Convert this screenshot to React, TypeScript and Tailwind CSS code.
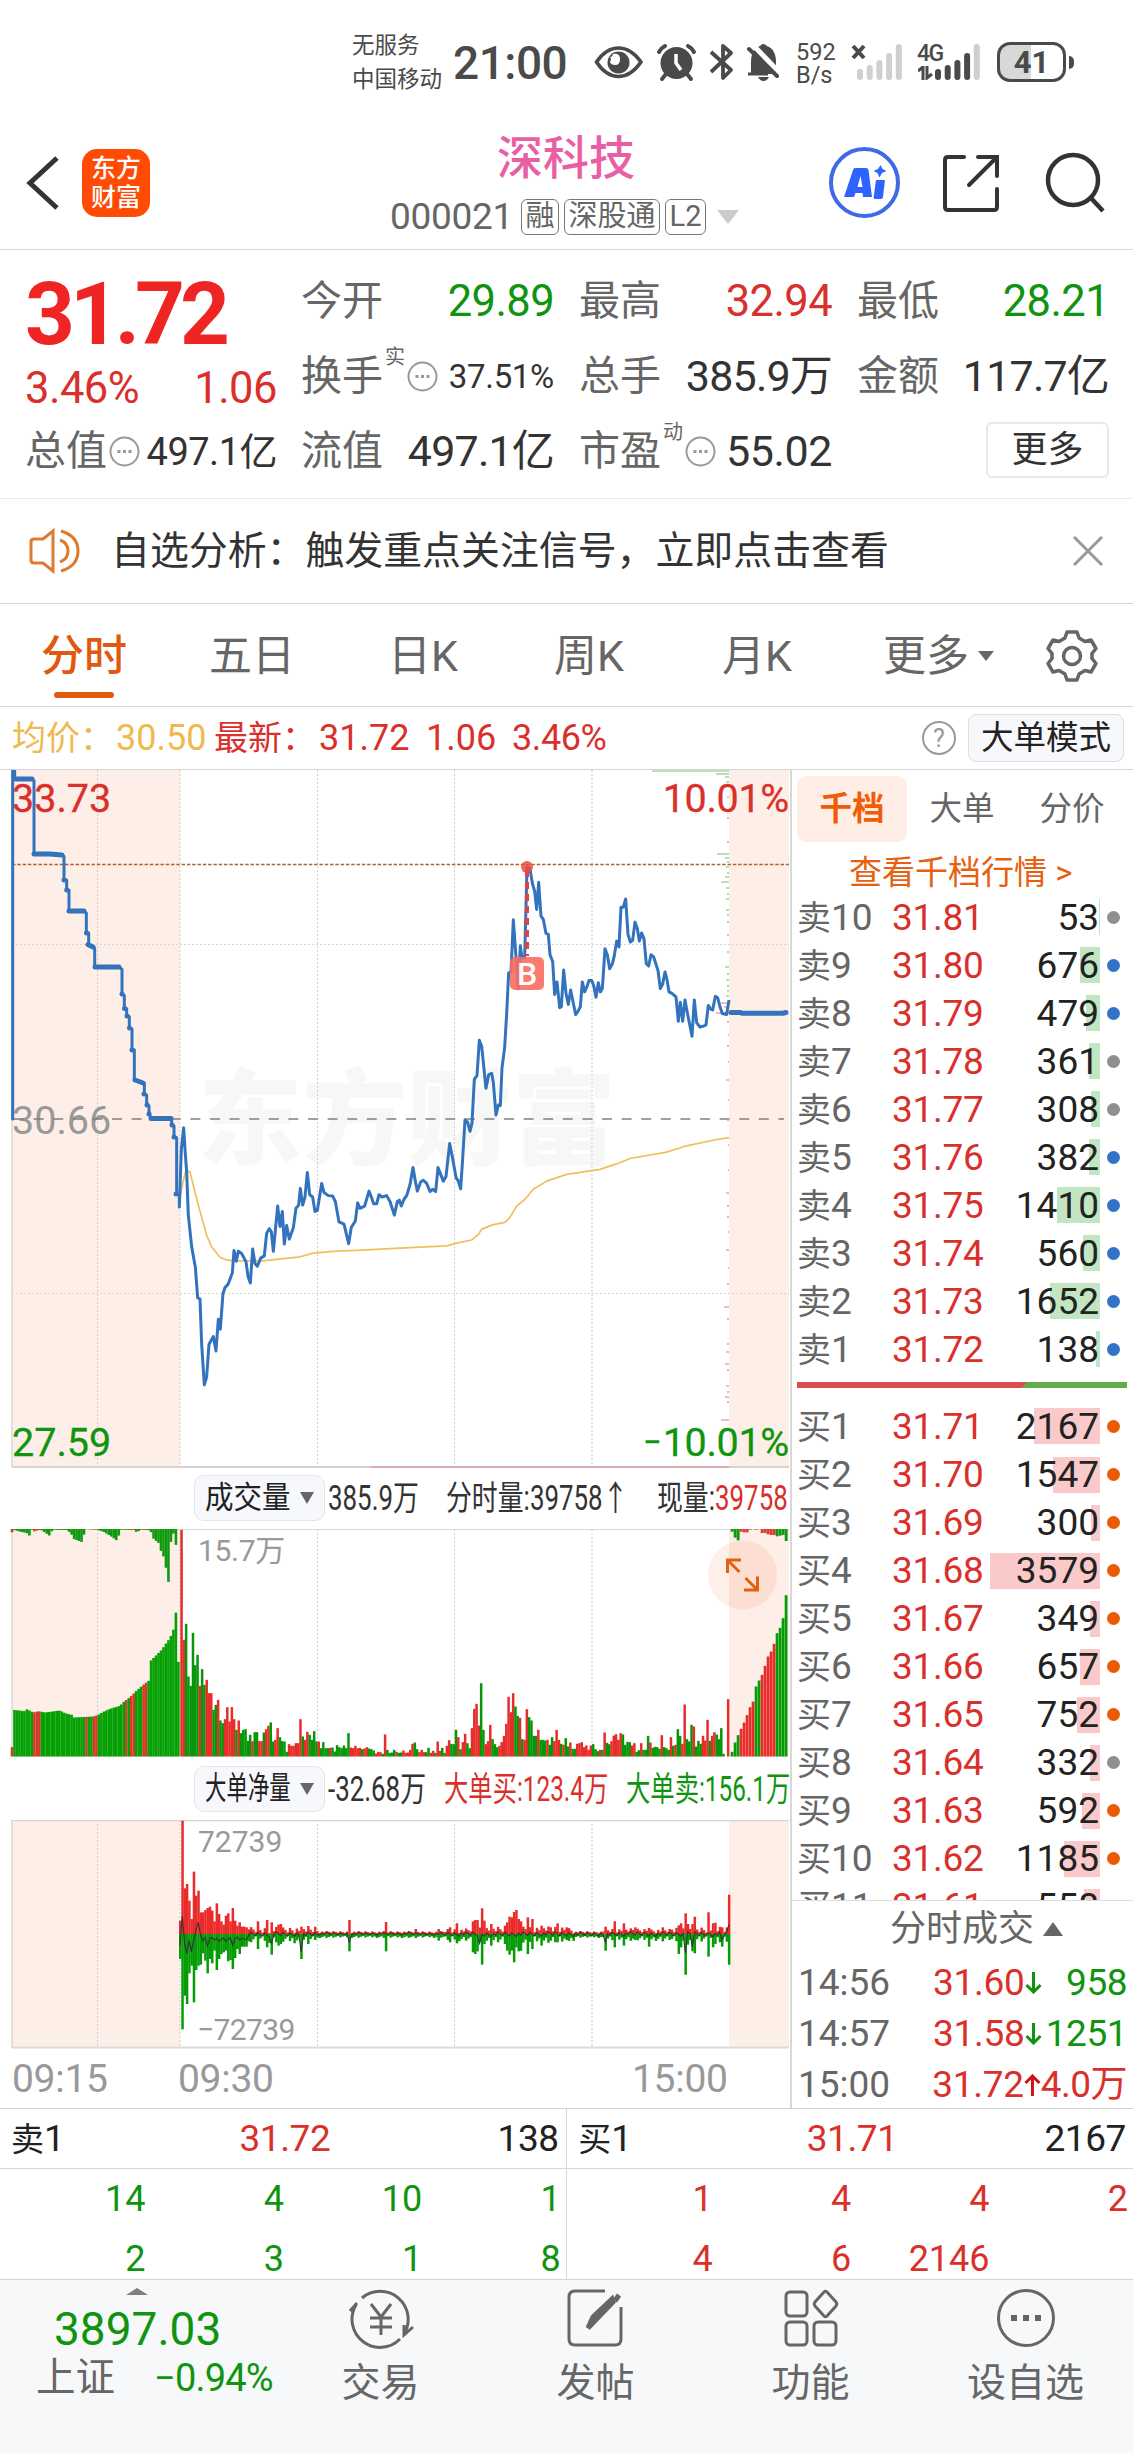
import React from "react";
import clsx from "clsx";

const RED = "#d9302c";
const GREEN = "#109410";
const BLUE = "#3373bd";

type Level = { label: string; price: string; vol: string; bar: number; dot: string };

const sells: Level[] = [
  { label: "卖10", price: "31.81", vol: "53", bar: 1, dot: "bg-[#8e8e93]" },
  { label: "卖9", price: "31.80", vol: "676", bar: 20, dot: "bg-[#3373c4]" },
  { label: "卖8", price: "31.79", vol: "479", bar: 14, dot: "bg-[#3373c4]" },
  { label: "卖7", price: "31.78", vol: "361", bar: 11, dot: "bg-[#8e8e93]" },
  { label: "卖6", price: "31.77", vol: "308", bar: 9, dot: "bg-[#8e8e93]" },
  { label: "卖5", price: "31.76", vol: "382", bar: 11, dot: "bg-[#3373c4]" },
  { label: "卖4", price: "31.75", vol: "1410", bar: 43, dot: "bg-[#3373c4]" },
  { label: "卖3", price: "31.74", vol: "560", bar: 17, dot: "bg-[#3373c4]" },
  { label: "卖2", price: "31.73", vol: "1652", bar: 50, dot: "bg-[#3373c4]" },
  { label: "卖1", price: "31.72", vol: "138", bar: 4, dot: "bg-[#3373c4]" },
];

const buys: Level[] = [
  { label: "买1", price: "31.71", vol: "2167", bar: 66, dot: "bg-[#e85a05]" },
  { label: "买2", price: "31.70", vol: "1547", bar: 47, dot: "bg-[#e85a05]" },
  { label: "买3", price: "31.69", vol: "300", bar: 9, dot: "bg-[#e85a05]" },
  { label: "买4", price: "31.68", vol: "3579", bar: 110, dot: "bg-[#e85a05]" },
  { label: "买5", price: "31.67", vol: "349", bar: 10, dot: "bg-[#e85a05]" },
  { label: "买6", price: "31.66", vol: "657", bar: 20, dot: "bg-[#e85a05]" },
  { label: "买7", price: "31.65", vol: "752", bar: 23, dot: "bg-[#e85a05]" },
  { label: "买8", price: "31.64", vol: "332", bar: 10, dot: "bg-[#8e8e93]" },
  { label: "买9", price: "31.63", vol: "592", bar: 18, dot: "bg-[#e85a05]" },
  { label: "买10", price: "31.62", vol: "1185", bar: 36, dot: "bg-[#e85a05]" },
  { label: "买11", price: "31.61", vol: "558", bar: 16, dot: "bg-[#e85a05]" },
];

// price paths live on a 3x wide grid, see the scale() on the group
const preOpen =
  "38,793 38,24 44,24 44,42 94,42 102,46 102,207 150,207 185,209 192,213 192,265 200,265 200,287 207,287 207,334 250,334 259,338 259,382 266,382 266,407 275,410 284,416 284,457 355,457 366,462 366,517 373,520 373,549 380,549 380,565 388,567 388,592 396,594 396,640 403,640 403,707 425,712 433,714 433,737 440,740 440,762 447,764 447,782 455,792 510,792 515,796 515,806 522,808 522,832 530,834 530,958";

const price =
  "530,958 538,960 538,987 544,860 551,812 555,860 560,910 565,1005 575,1075 586,1120 593,1188 600,1190 605,1290 613,1380 620,1362 627,1290 640,1273 648,1305 655,1235 661,1257 669,1178 675,1165 684,1158 697,1133 702,1083 709,1107 715,1085 725,1090 738,1108 744,1140 751,1155 758,1080 765,1112 772,1118 782,1100 793,1095 800,1045 808,1035 814,1042 820,1085 833,985 840,1030 847,997 853,1069 860,1028 868,1058 880,1033 888,990 896,983 901,946 908,983 915,965 922,911 929,960 938,965 945,997 952,995 965,935 972,955 985,962 998,963 1006,975 1017,1020 1032,1025 1046,1068 1054,1032 1066,1018 1073,978 1080,990 1094,985 1107,952 1114,965 1121,980 1130,980 1137,960 1146,965 1160,962 1170,975 1183,1005 1192,975 1198,972 " +
  "1204,985 1212,970 1220,962 1230,938 1239,900 1246,930 1252,952 1262,932 1270,928 1280,935 1290,953 1298,948 1307,953 1314,900 1322,915 1330,930 1338,920 1349,847 1358,880 1368,922 1375,930 1382,947 1388,880 1395,795 1403,800 1410,820 1416,802 1423,705 1431,697 1438,619 1445,632 1458,725 1466,695 1475,692 1480,712 1488,784 1495,762 1501,763 1506,680 1514,635 1520,560 1526,470 1533,468 1540,353 1548,435 1555,505 1561,410 1566,438 1574,438 1581,237 1590,240 1597,272 1604,290 1610,330 1616,270 1623,345 1630,352 1638,383 1645,385 1650,430 1658,445 1664,518 1671,490 1679,547 1684,545 1691,464 1698,515 1705,540 1712,508 1718,530 1727,562 1734,555 1741,545 1747,490 1754,512 1761,500 1767,487 1775,487 1781,498 1788,524 1795,492 1801,512 1807,505 1815,417 1822,430 1829,461 1837,450 1843,432 1850,400 1857,413 1863,325 1870,325 1877,307 1884,385 1891,402 1898,398 1905,358 1912,372 1918,400 1925,382 1932,395 1939,450 1946,455 1953,430 1961,435 1974,465 1981,505 1988,495 1995,468 2001,485 2007,512 2015,515 2028,523 2035,577 2041,535 2048,577 2055,530 2062,558 2076,610 2083,530 2090,580 2100,590 2112,587 2118,585 2125,542 2132,550 2138,552 2146,522 2153,525 2160,545 2167,560 2180,562 2187,530";

const average =
  "538,972 550,930 558,905 570,910 585,955 605,1010 620,1050 635,1075 660,1098 680,1104 700,1106 790,1106 850,1101 895,1098 940,1089 1000,1085 1100,1082 1200,1078 1340,1073 1370,1067 1415,1060 1435,1048 1445,1036 1480,1026 1515,1021 1530,1010 1550,985 1575,970 1600,948 1640,930 1700,915 1800,904 1850,892 1890,880 2000,866 2060,852 2150,838 2188,834";

// [y, length] of the chip distribution ticks beside the closing auction
const ticksUp = [
  [774, 13], [777, 4], [782, 3], [797, 2], [818, 2], [842, 2], [854, 12], [858, 4], [862, 2], [867, 3], [873, 2], [877, 4],
  [882, 8], [888, 3], [894, 2], [899, 3], [910, 3], [915, 2], [922, 2], [935, 2], [952, 2], [967, 4], [974, 2], [980, 3], [986, 2], [991, 2], [996, 3],
];
const ticksDown = [
  [1003, 8], [1007, 5], [1013, 13], [1022, 2], [1035, 1], [1046, 2], [1062, 1], [1080, 3], [1100, 1], [1120, 2], [1145, 1], [1170, 1],
  [1193, 3], [1206, 2], [1217, 2], [1232, 1], [1250, 3], [1268, 1], [1284, 2], [1307, 5], [1319, 2], [1344, 2], [1352, 3], [1364, 4],
  [1370, 2], [1386, 3], [1392, 2], [1397, 4], [1402, 2], [1420, 8],
];

// auction volume outline, [x, top]
const auction = [
  [36, 862], [40, 750], [75, 754], [80, 748], [100, 758], [115, 754], [135, 758], [180, 752], [195, 760], [215, 765], [222, 773],
  [280, 770], [295, 765], [310, 756], [330, 747], [360, 738], [370, 727], [390, 712], [410, 692], [430, 675], [447, 662], [452, 603],
  [470, 585], [485, 570], [500, 548], [510, 535], [520, 510], [525, 500], [530, 423], [537, 672],
];
const auctionTop = [
  [36, 10], [44, 3], [60, 8], [80, 12], [88, 20], [95, 1], [98, 8], [118, 3], [125, 4], [140, 14], [150, 21], [157, 2], [200, 3],
  [212, 12], [222, 30], [248, 40], [255, 0], [290, 2], [310, 8], [330, 20], [353, 36], [360, 2], [405, 3], [412, 14], [418, 2], [445, 3],
  [454, 10], [461, 30], [476, 42], [485, 72], [492, 85], [499, 122], [507, 168], [514, 12], [521, 14], [529, 54],
];

// minute volume, negative is a falling minute
const volume = [
  680, 350, -398, -240, -212, -371, -274, -305, 212, -262, -215, 230, 190, 190, -140, -155, 170, -108, -100, 112, 148, 105, 148, 112, -80,
  108, -70, -80, -82, -47, -65, 46, -73, -73, 46, 46, -72, 82, 92, -102, -45, 50, 85, -58, -46, -45, -14, 37, 32, 32, 40, 40, 112, -60, 50,
  74, -65, -50, -76, -45, 45, -25, -43, -25, -25, 26, -27, -15, -34, -28, -25, -33, -25, -70, 27, 25, 32, 25, 26, -22, 24, 28, -24, -22,
  -18, 9, 14, 13, -8, 66, -20, -11, -12, -20, 14, -11, -12, 18, 11, 12, 20, 38, -42, -22, 13, 20, 13, -13, -26, 11, 17, -11, 45, 17, -26,
  -11, 32, 49, -38, -37, -80, 58, -22, 43, 68, -40, -25, 85, 143, 158, 93, -220, -80, 37, 46, 95, -52, -37, -28, 32, 43, 62, 98, 179, 133,
  190, -150, -122, 116, -52, 50, 142, -118, -108, -62, -62, 80, -50, -50, -48, 50, -35, -58, 46, 80, 50, -38, 35, -55, -30, 42, -23, -23,
  38, 40, 43, 28, 33, 20, 33, -37, -22, -16, 20, -20, 72, -41, -37, 46, 63, 67, 50, 70, -66, -35, -44, -43, 33, 40, -14, -19, 40, -20,
  -20, -62, 42, -26, -29, -28, -23, 64, -28, -25, -20, 58, -32, 35, -82, -62, 38, 156, -52, -45, -95, 90, -30, -47, -38, 62, 48, 110, -47,
  62, 73, -66, -52, -85, -8, 0, 172,
];
const closing = [-14, -42, -64, 83, 102, 124, 148, 165, -210, -228, 245, 272, 300, 315, 338, -370, -386, -415, -484];
const closingTop = [-8, -26, -34, 8, 10, 10, 2, 0, 2, 0, 12, 12, 16, 18, 18, -22, -20, -18, -36];

// big order buy / sell per minute: the opening half hour, then isolated spikes by index
const bigOpen = [
  [40, 75], [340, 286], [137, 185], [150, 210], [100, 118], [45, 95], [187, 205], [115, 108], [130, 95], [65, 92], [65, 58], [72, 80],
  [78, 118], [82, 75], [70, 88], [38, 50], [92, 108], [60, 75], [38, 60], [28, 55], [55, 50], [62, 82], [38, 78], [78, 105], [40, 72],
  [25, 45], [35, 60], [22, 38], [22, 38], [20, 38], [14, 22],
];
const bigSpikes: Record<number, number[]> = {
  34: [38, 45], 38: [42, 40], 40: [35, 62], 43: [28, 35], 44: [30, 30], 53: [22, 75], 56: [24, 30], 59: [22, 18], 74: [42, 52],
  90: [36, 52], 103: [15, 12], 113: [15, 20], 118: [20, 25], 121: [32, 28], 128: [38, 55], 129: [42, 60], 130: [42, 52], 132: [77, 92],
  133: [40, 30], 136: [30, 35], 142: [25, 30], 143: [35, 50], 144: [52, 62], 145: [50, 50], 146: [66, 85], 147: [72, 40], 148: [45, 52],
  149: [38, 50], 152: [50, 60], 154: [45, 45], 158: [25, 35], 162: [20, 20], 165: [32, 25], 169: [20, 18], 186: [22, 50], 190: [38, 40],
  194: [32, 35], 199: [20, 18], 205: [18, 38], 211: [20, 22], 218: [26, 60], 219: [32, 40], 221: [62, 122], 222: [30, 32], 224: [30, 52],
  225: [52, 58], 231: [65, 68], 233: [32, 40], 234: [34, 30], 237: [20, 38], 240: [118, 92],
};

function noise(i: number) {
  return ((i * 7919 + 104) % 97) / 97;
}

function bigOrder(i: number): number[] {
  if (i < bigOpen.length) return bigOpen[i];
  if (bigSpikes[i]) return bigSpikes[i];
  const calm = (i > 60 && i < 116) || (i > 172 && i < 185);
  const busy = i < 60 || (i > 126 && i < 172) || i > 214;
  const k = calm ? 6 : busy ? 20 : 14;
  return [3 + noise(i) * k, 5 + noise(i + 3) * k * 1.2];
}

const netLine = Array.from({ length: 241 }, (_, i) => {
  const early: Record<number, number> = { 0: -35, 1: 52, 2: -30, 3: -60, 4: -20, 5: -55, 6: -20, 7: 10, 8: 34, 9: -5, 10: -22, 12: -38, 14: -12, 17: -24, 22: -12, 23: -35, 28: -15, 40: -30, 53: -55, 74: -25, 131: -30, 186: -26, 221: -58, 224: -40, 237: -20, 240: 26 };
  const v = early[i] ?? (i < 30 ? -10 - noise(i) * 15 : (noise(i) - 0.6) * (i > 60 && i < 116 ? 9 : 16));
  return `${(180 + i * 2.287).toFixed(1)},${(113.5 - v / 3).toFixed(1)}`;
}).join(" ");

function interpolate(points: number[][], x: number) {
  for (let i = 1; i < points.length; i++) {
    const [x0, y0] = points[i - 1];
    const [x1, y1] = points[i];
    if (x <= x1) return y0 + ((x - x0) / (x1 - x0)) * (y1 - y0);
  }
  return points[points.length - 1][1];
}

const isRedAuction = (x: number) =>
  x < 40 || (x > 96 && x < 122) || (x > 254 && x < 266) || (x > 279 && x < 290) || (x > 374 && x < 384) || (x > 391 && x < 408) || (x > 428 && x < 444);

const VGrid = ({ h }: { h: number }) => (
  <g stroke="#cfcfcf" strokeWidth="1" strokeDasharray="2 2">
    {[97.5, 180, 317.5, 454.5, 592].map((x) => (
      <line key={x} x1={x} x2={x} y1="0" y2={h} />
    ))}
  </g>
);

const PriceChart = () => (
  <svg width="790" height="699" viewBox="0 770 790 699" className="block overflow-visible">
    <rect x="12" y="770" width="168" height="697" fill="#fdeee7" />
    <rect x="729" y="770" width="60" height="697" fill="#fdeee7" />
    <text x="198" y="1157" fontSize="104" fontWeight="900" fill="#f7f7f7" textLength="418">
      东方财富
    </text>
    <g transform="translate(0 770)">
      <VGrid h={697} />
    </g>
    <g stroke="#d6d6d6" strokeDasharray="2 2">
      <line x1="12" x2="789" y1="944.5" y2="944.5" />
      <line x1="12" x2="789" y1="1293.5" y2="1293.5" />
    </g>
    <line x1="12" x2="12" y1="770" y2="1467" stroke="#d8d8d8" strokeWidth="1.5" />
    <text x="12" y="1134" fontSize="39.500" fill="#999">30.66</text>
    <line x1="14" x2="784" y1="1119" y2="1119" stroke="#808080" strokeWidth="1.6" strokeDasharray="10 9.6" />
    <line x1="12" x2="789" y1="864.5" y2="864.5" stroke="#b5622f" strokeWidth="1.4" strokeDasharray="3.5 1.8" />
    <text x="12" y="812" fontSize="39.500" fill={RED} stroke={RED} strokeWidth="0.300">33.73</text>
    <text x="12" y="1456" fontSize="39.500" fill={GREEN} stroke={GREEN} strokeWidth="0.300">27.59</text>
    <rect x="652" y="770" width="77" height="2" fill="#bfe0bf" />
    {ticksUp.map(([y, w]) => (
      <line key={y} x1={729 - w} x2="729" y1={y} y2={y} stroke="#92cf92" strokeWidth="1.3" />
    ))}
    {ticksDown.map(([y, w]) => (
      <line key={y} x1={729 - w} x2="729" y1={y} y2={y} stroke="#e79a9a" strokeWidth="1.3" />
    ))}
    <g transform="translate(0 760) scale(0.33333 0.45283)" fill="none" strokeLinejoin="round">
      <polyline points={average} stroke="#edc05c" strokeWidth="1.7" vectorEffect="non-scaling-stroke" />
      <polyline points={preOpen} stroke={BLUE} strokeWidth="3" strokeLinecap="round" vectorEffect="non-scaling-stroke" />
      <polyline points={price} stroke={BLUE} strokeWidth="3" vectorEffect="non-scaling-stroke" />
    </g>
    <path
      d="M15 779H32M34 854H50L62 855M69 911H84M95 967H119M135 1080L143 1083M151 1118.500H171M88 944.500L93 947"
      stroke={BLUE} strokeWidth="5" strokeLinecap="round" fill="none"
    />
    <path d="M64 880h.1M66.700 890h.1M86.500 933h.1M122 994h.1M124.500 1008.500h.1M127 1016h.1M129.500 1028h.1M132 1050h.1M144 1094h.1M147 1105h.1M149 1114h.1M172 1125h.1M174 1137h.1M176 1194h.1" stroke={BLUE} strokeWidth="5" strokeLinecap="round" />
    <path d="M731 1012.500H740L742 1013.200H783L786 1012.500" stroke={BLUE} strokeWidth="5" strokeLinecap="round" fill="none" />
    <line x1="527" x2="527" y1="870" y2="956" stroke="#df4145" strokeWidth="4" strokeDasharray="7 5" />
    <circle cx="527" cy="867" r="6" fill="#e8503f" fillOpacity="0.85" />
    <rect x="510" y="957" width="34" height="33" rx="5" fill="#f96d61" fillOpacity="0.9" />
    <text x="527" y="984.500" fontSize="32" fontWeight="500" fill="#fff" textAnchor="middle">B</text>
    <text x="789" y="812" fontSize="39.500" letterSpacing="-0.300" fill={RED} stroke={RED} strokeWidth="0.300" textAnchor="end">10.01%</text>
    <text x="789" y="1456" fontSize="39.500" letterSpacing="-0.300" fill={GREEN} stroke={GREEN} strokeWidth="0.300" textAnchor="end">10.01%</text>
    <text x="643" y="1456" fontSize="39.500" textLength="19" lengthAdjust="spacingAndGlyphs" fill={GREEN}>−</text>
    <line x1="12" x2="789" y1="1467" y2="1467" stroke="#d4d4d4" strokeWidth="2" />
    <line x1="371" x2="729" y1="1467" y2="1467" stroke="#dbaeae" strokeWidth="2" />
  </svg>
);

const VolumeChart = () => (
  <svg width="790" height="228" viewBox="0 0 790 228" className="block">
    <rect x="12" width="168" height="228" fill="#fdeee7" />
    <rect x="729" width="60" height="228" fill="#fdeee7" />
    <VGrid h={228} />
    <line x1="12" x2="789" y1="0.5" y2="0.5" stroke="#d8d8d8" />
    <line x1="12" x2="12" y1="0" y2="228" stroke="#d8d8d8" strokeWidth="1.5" />
    <text x="198" y="32" fontSize="30" fill="#999" letterSpacing="-0.300">15.7万</text>
    {Array.from({ length: 68 }, (_, i) => {
      const x = 36 + i * 7.45;
      const h = (890 - interpolate(auction, x)) / 3;
      const red = isRedAuction(x);
      return (
        <g key={i}>
          <rect x={x / 3 - 1.3} y={227.5 - h} width="2.6" height={h} fill={red ? "#d83a2a" : "#04a004"} />
          <rect x={x / 3 - 1.3} y="0" width="2.6" height={x > 533 ? 0 : interpolate(auctionTop, x) / 3} fill={red ? "#d83a2a" : "#109a10"} />
        </g>
      );
    })}
    {volume.map((v, i) => (
      <rect key={i} x={180.300 + i * 2.287} y={227.5 - Math.abs(v) / 3} width="2.5" height={Math.abs(v) / 3} fill={v > 0 ? "#e52e2a" : "#079607"} />
    ))}
    {closing.map((v, i) => (
      <g key={i}>
        <rect x={730.700 + i * 3} y={227.5 - Math.abs(v) / 3} width="2.8" height={Math.abs(v) / 3} fill={v > 0 ? "#ea2b29" : "#079c07"} />
        <rect x={730.700 + i * 3} y="0" width="2.9" height={Math.abs(closingTop[i]) / 3} fill={closingTop[i] > 0 ? "#dc3b32" : "#109a10"} />
      </g>
    ))}
    <circle cx="742.500" cy="46" r="34.500" fill="#f5651a" fillOpacity="0.1" />
    <path d="M741 31H727.500V44M728 31.500L739.500 43M757.500 47.500V61H744M757 60.500L745.500 49" fill="none" stroke="#e2600f" strokeWidth="3" />
  </svg>
);

const BigOrderChart = () => (
  <svg width="790" height="230" viewBox="0 0 790 230" className="block">
    <rect x="12" width="168" height="227" fill="#fdeee7" />
    <rect x="729" width="60" height="227" fill="#fdeee7" />
    <VGrid h={227} />
    <line x1="12" x2="789" y1="0.5" y2="0.5" stroke="#d4d4d4" strokeWidth="1.5" />
    <line x1="12" x2="12" y1="0" y2="228" stroke="#d8d8d8" strokeWidth="1.5" />
    {Array.from({ length: 241 }, (_, i) => {
      const [up, down] = bigOrder(i);
      const x = 179 + i * 2.287;
      return (
        <g key={i}>
          <rect x={x} y={114 - up / 3} width="2.5" height={up / 3} fill="#ea2b29" />
          <rect x={x} y="114" width="2.5" height={down / 3} fill="#069c06" />
        </g>
      );
    })}
    <polyline points={netLine} fill="none" stroke="#333" strokeWidth="1.1" />
    <text x="198" y="32" fontSize="30" fill="#999">72739</text>
    <text x="197" y="220" fontSize="30" fill="#999" letterSpacing="-0.600">−72739</text>
    <line x1="12" x2="789" y1="227.500" y2="227.500" stroke="#dcdcdc" strokeWidth="2" />
  </svg>
);

const Dots = () => (
  <svg width="31" height="31" viewBox="0 0 31 31" className="shrink-0" fill="none" stroke="#999" strokeWidth="2">
    <circle cx="15.500" cy="15.500" r="14" />
    <path d="M8.500 15.500h3M14 15.500h3M19.500 15.500h3" strokeWidth="3" />
  </svg>
);

const Signal = ({ solid }: { solid: number }) => (
  <svg width="46" height="38" viewBox="0 0 46 38">
    {[11, 15, 20, 27, 36].map((h, i) => (
      <rect key={h} x={i * 9.7} y={37 - h} width="6" height={h} rx="3" fill={i < solid ? "#4a4a4a" : "#cfcfcf"} />
    ))}
  </svg>
);

const StatusBar = () => (
  <div className="h-[112px] pt-[28px] flex text-[#4a4a4a]">
    <div className="ml-[352px] w-[101px] text-[22.500px] leading-[34px] whitespace-nowrap">
      <p>无服务</p>
      <p>中国移动</p>
    </div>
    <p className="w-[140px] pt-[12px] text-[46px] leading-[46px] font-medium tracking-[-0.5px]">21:00</p>
    <svg width="190" height="40" viewBox="593 42 190 40" className="mt-[14px] shrink-0" fill="none" stroke="#4a4a4a">
      <path d="M596.500 62Q606 48 618.500 48T641 62Q631 76.500 618.500 76.500T596.500 62Z" strokeWidth="3.600" />
      <circle cx="618.500" cy="62.500" r="11" fill="#4a4a4a" stroke="none" />
      <path d="M613 54q7-1 7 5t-5 6q-4 0-5-3z" fill="#fff" stroke="none" />
      <path d="M610 57q3-1.500 5 1l-3 3z" fill="#fff" stroke="none" />
      <circle cx="676.500" cy="63" r="16" fill="#4a4a4a" stroke="none" />
      <path d="M659 52Q661 48 665 46M694 52Q692 48 688 46M666 74l-4 5M687 74l4 5" strokeWidth="4" strokeLinecap="round" />
      <path d="M676 54v9l5 7" stroke="#fff" strokeWidth="3.500" />
      <path d="M711 52l20 18-8 8V46l8 7-20 19" strokeWidth="3.800" strokeLinejoin="round" />
      <path d="M751 74V62c0-11 6-15 9-16q3-4 7 0c6 2 9 8 9 16v12z" fill="#4a4a4a" stroke="none" />
      <path d="M752 44l31 32" stroke="#fff" strokeWidth="5" />
      <path d="M749 49l28 27" strokeWidth="4" strokeLinecap="round" />
      <path d="M748 74h20" strokeWidth="3" />
      <path d="M758 77h11q-2 4-5.500 4t-5.500-4z" fill="#4a4a4a" stroke="none" />
    </svg>
    <div className="ml-[13px] w-[55px] pt-[13px] text-[23.500px] leading-[23px]">
      <p>592</p>
      <p>B/s</p>
    </div>
    <div className="relative w-[70px] pl-[6px] pt-[15px]">
      <Signal solid={0} />
      <svg width="16" height="16" viewBox="0 0 16 16" className="absolute left-0 top-[16px]" stroke="#4a4a4a" strokeWidth="4">
        <path d="M2 2l11 12M13 2L2 14" />
      </svg>
    </div>
    <div className="relative w-[66px] pl-[5px] pt-[15px]">
      <div className="pl-[9px]">
        <Signal solid={4} />
      </div>
      <p className="absolute left-[-4px] top-[14px] text-[23px] leading-[24px] font-medium tracking-[-1.500px]">4G</p>
      <svg width="16" height="14" viewBox="0 0 16 14" className="absolute left-[-3px] top-[38px]" fill="none" stroke="#4a4a4a" strokeWidth="3">
        <path d="M0 5l5-4v13M9 0v12l5-4" />
      </svg>
    </div>
    <div className="ml-[10px] mt-[14px] flex items-center h-[40px]">
      <div className="w-[69px] h-[40px] rounded-[13px] border-[3px] border-[#4a4a4a] flex items-center justify-center bg-[linear-gradient(to_right,#d8d8d8_50%,#fff_50%)] text-[31px] leading-none font-bold">
        41
      </div>
      <div className="ml-[3px] w-[5px] h-[13px] rounded-r-full bg-[#4a4a4a]" />
    </div>
  </div>
);

const Tag = ({ children }: { children: React.ReactNode }) => (
  <span className="h-[36px] px-[3.500px] flex items-center whitespace-nowrap border-[1.500px] border-[#777] rounded-[6px] text-[29px] leading-none">
    {children}
  </span>
);

const Header = () => (
  <div className="h-[138px] flex border-b-[1.500px] border-[#d8d8d8]">
    <svg width="34" height="54" viewBox="0 0 34 54" className="ml-[26px] mt-[44px]" fill="none" stroke="#333" strokeWidth="5">
      <path d="M31 2L4 27l27 25" />
    </svg>
    <div className="ml-[22px] mt-[37px] w-[68px] h-[68px] rounded-[15px] bg-[#ff4b03] text-white text-[25px] leading-[29px] font-medium text-center pt-[5px]">
      <p>东方</p>
      <p>财富</p>
    </div>
    <div className="ml-[240px] w-[351px] pt-[22px]">
      <p className="pl-[107px] text-[46px] leading-[48px] font-medium text-[#e95fa6]">深科技</p>
      <div className="mt-[16px] flex items-center text-[#666]">
        <span className="text-[37px] leading-none w-[131px] shrink-0 tracking-[-0.3px]">000021</span>
        <div className="flex gap-[5px] shrink-0">
          <Tag>融</Tag>
          <Tag>深股通</Tag>
          <Tag>L2</Tag>
        </div>
        <span className="ml-[11px] border-x-[11px] border-t-[14px] border-x-transparent border-t-[#ccc]" />
      </div>
    </div>
    <div className="ml-[88px] mt-[35px] w-[71px] h-[71px] rounded-full border-[4px] border-[#3f69e6] flex items-center justify-center">
      <svg width="44" height="36" viewBox="0 0 44 36" fill="#2f63ff">
        <path fillRule="evenodd" d="M12 3h11q2 0 2.500 2L29 32h-9l-.5-4h-7L11 32H1L10 5q.5-2 2-2zM17.500 11l-3 11h5z" />
        <path d="M33 15h9l-2 17q-.3 2-2 2h-6q-1.500 0-1.300-2z" />
        <path d="M37.500 0l2 4 4 2-4.500 2-2.500 4.500-2-4.500-4-2 4.500-2z" />
      </svg>
    </div>
    <svg width="58" height="60" viewBox="0 0 58 60" className="ml-[42px] mt-[41px]" fill="none" stroke="#333" strokeWidth="4">
      <path d="M22 4H6Q3 4 3 7V54Q3 57 6 57H52Q55 57 55 54V36" strokeLinecap="round" />
      <path d="M36 4H55V23M54 5L27 32" strokeLinecap="round" />
    </svg>
    <svg width="60" height="62" viewBox="0 0 60 62" className="ml-[45px] mt-[39px]" fill="none" stroke="#333" strokeWidth="4.500">
      <circle cx="28" cy="29" r="25" />
      <path d="M45 46l13 14" />
    </svg>
  </div>
);

const Stat = ({ label, sup, dots, value, cls }: { label: string; sup?: string; dots?: boolean; value: string; cls?: string }) => (
  <div className="relative h-[75px] flex items-center justify-between leading-none whitespace-nowrap">
    <span className="flex items-center text-[41px] text-[#666]">
      {label}
      {sup && <sup className="absolute left-[84px] top-[8px] text-[20px] leading-none">{sup}</sup>}
      {dots && (
        <span className={sup ? "ml-[24px]" : "ml-[2px]"}>
          <Dots />
        </span>
      )}
    </span>
    <span className={cls || "text-[43px] text-[#333] tracking-[-0.8px]"}>{value}</span>
  </div>
);

const Quote = () => (
  <div className="h-[249px] flex pl-[25px] pt-[14px] border-b-[1.500px] border-[#ececec]">
    <div className="w-[252px]">
      <p className="h-[85px] pt-[6px] text-[87px] leading-[88px] font-bold text-[#ef2524] tracking-[-5px]">31.72</p>
      <div className="h-[65px] pt-[18px] flex justify-between text-[43.500px] leading-[44px] text-[#d9302c] tracking-[-0.5px]">
        <span>3.46%</span>
        <span>1.06</span>
      </div>
      <Stat label="总值" dots value="497.1亿" cls="text-[38px] text-[#333] tracking-[-0.5px]" />
    </div>
    <div className="ml-[24px] w-[253px]">
      <Stat label="今开" value="29.89" cls="text-[43.500px] text-[#109410] tracking-[-0.6px]" />
      <Stat label="换手" sup="实" dots value="37.51%" cls="text-[33px] text-[#333] tracking-[-0.3px]" />
      <Stat label="流值" value="497.1亿" />
    </div>
    <div className="ml-[25px] w-[253px]">
      <Stat label="最高" value="32.94" cls="text-[43.500px] text-[#d9302c] tracking-[-0.6px]" />
      <Stat label="总手" value="385.9万" />
      <Stat label="市盈" sup="动" dots value="55.02" cls="text-[43px] text-[#333] tracking-[-0.4px]" />
    </div>
    <div className="ml-[25px] w-[252px]">
      <Stat label="最低" value="28.21" cls="text-[43.500px] text-[#109410] tracking-[-0.6px]" />
      <Stat label="金额" value="117.7亿" />
      <button className="ml-auto mt-[8px] block w-[123px] h-[56px] rounded-[6px] border-2 border-[#e8e8e8] text-[36px] leading-none text-[#333]">更多</button>
    </div>
  </div>
);

const Notice = () => (
  <div className="h-[105px] flex items-center border-b-[1.500px] border-[#d4d4d4]">
    <svg width="52" height="46" viewBox="0 0 52 46" className="ml-[29px]" fill="none" stroke="#dd7a2e" strokeWidth="3">
      <path d="M24 3v40l-10-8H5q-3 0-3-3V14q0-3 3-3h9zM31 12q8 3 8 11t-8 11M32 3q17 5 17 20T32 43" />
    </svg>
    <p className="ml-[30px] text-[38.900px] leading-none text-[#333]">自选分析：触发重点关注信号，立即点击查看</p>
    <svg width="30" height="30" viewBox="0 0 30 30" className="ml-auto mr-[30px]" stroke="#999" strokeWidth="3">
      <path d="M1 1l28 28M29 1L1 29" />
    </svg>
  </div>
);

const Tabs = () => (
  <div className="h-[103px] pt-[2px] flex items-center border-b-[1.500px] border-[#d4d4d4] text-[43px] leading-none text-[#666]">
    <div className="relative ml-[41px] w-[168px] text-[#e0590f] font-medium">
      分时
      <span className="absolute left-[13px] top-[57px] w-[60px] h-[6px] rounded-full bg-[#e35a0c]" />
    </div>
    <span className="w-[179px]">五日</span>
    <span className="w-[166px]">日K</span>
    <span className="w-[168px]">周K</span>
    <span className="w-[161px]">月K</span>
    <span>更多</span>
    <span className="ml-[9px] border-x-[8px] border-t-[10px] border-x-transparent border-t-[#666]" />
    <svg width="54" height="54" viewBox="0 0 54 54" className="ml-[51px]" fill="none" stroke="#666" strokeWidth="3.500" strokeLinejoin="round">
      <path d="M22 3h10l2 6 6 3.500 6-1.500 5 8.500-4 5v5l4 5-5 8.500-6-1.500-6 3.500-2 6H22l-2-6-6-3.500L8 43l-5-8.500 4-5v-5l-4-5L8 11l6 1.500L20 9z" />
      <circle cx="27" cy="27" r="8.500" />
    </svg>
  </div>
);

const InfoBar = () => (
  <div className="h-[63px] flex items-center border-b-[1.500px] border-[#d4d4d4] text-[36px] leading-none text-[#d9302c]">
    <span className="ml-[12px] w-[104px] text-[34px] text-[#efb94f]">均价：</span>
    <span className="w-[98px] text-[#efb94f]">30.50</span>
    <span className="w-[105px] text-[34px]">最新：</span>
    <span className="w-[107px]">31.72</span>
    <span className="w-[86px]">1.06</span>
    <span className="tracking-[-0.4px]">3.46%</span>
    <span className="ml-auto w-[34px] h-[34px] rounded-full border-[2.500px] border-[#999] text-[#999] text-[25px] flex items-center justify-center">?</span>
    <span className="ml-[12px] mr-[9px] w-[156px] h-[48px] rounded-[8px] border-[1.500px] border-[#dcdfe4] bg-[#f6f8fb] text-[32.500px] text-[#222] flex items-center justify-center">
      大单模式
    </span>
  </div>
);

const Squeezed = ({ children, className, tight }: { children: React.ReactNode; className?: string; tight?: boolean }) => (
  <span className={clsx("block whitespace-nowrap", className)}>
    <span className={clsx("inline-block origin-left text-[34.500px] leading-[46px]", tight ? "scale-x-[0.705]" : "scale-x-[0.750]")}>{children}</span>
  </span>
);

const Picker = ({ label, narrow }: { label: string; narrow?: boolean }) => (
  <div className="ml-[194px] w-[131px] h-[46px] shrink-0 rounded-[10px] border-[1.500px] border-[#e2e5ea] bg-[#f6f8fb] flex items-center text-[#222] whitespace-nowrap">
    <span className="ml-[10px] w-[95px]">
      <span className={clsx("inline-block origin-left leading-none", narrow ? "text-[32px] scale-x-[0.670]" : "text-[31px] scale-x-[0.920]")}>{label}</span>
    </span>
    <span className="shrink-0 border-x-[7.500px] border-t-[12px] border-x-transparent border-t-[#666]" />
  </div>
);

const Charts = () => (
  <div className="w-[790px] overflow-hidden">
    <PriceChart />
    <div className="h-[60px] pt-[6px] flex text-[#333]">
      <Picker label="成交量" />
      <Squeezed className="ml-[3px] w-[118px]">385.9万</Squeezed>
      <Squeezed className="w-[211px]">分时量:39758↑</Squeezed>
      <Squeezed className="w-[132px]">
        现量:<span className="text-[#d9302c]">39758</span>
      </Squeezed>
    </div>
    <VolumeChart />
    <div className="h-[63px] pt-[9px] flex text-[#333]">
      <Picker label="大单净量" narrow />
      <Squeezed className="ml-[3px] w-[116px]">-32.68万</Squeezed>
      <Squeezed tight className="w-[182px] text-[#d9302c]">大单买:123.4万</Squeezed>
      <Squeezed tight className="w-[162px] text-[#109410]">大单卖:156.1万</Squeezed>
    </div>
    <BigOrderChart />
    <div className="h-[57px] pt-[9px] pl-[12px] flex text-[39px] leading-[40px] text-[#999] tracking-[-0.3px]">
      <span className="w-[166px]">09:15</span>
      <span className="w-[454px]">09:30</span>
      <span>15:00</span>
    </div>
  </div>
);

const LevelRow = ({ row, side }: { row: Level; side: "sell" | "buy" }) => (
  <div className="h-[48.060px] shrink-0 flex items-center text-[37px] leading-none">
    <span className="w-[95px] text-[#666]">
      <span className="text-[34px]">{row.label[0]}</span>
      {row.label.slice(1)}
    </span>
    <span className="w-[95px] text-[#d9302c] tracking-[-0.3px]">{row.price}</span>
    <span className="relative w-[113px] h-[36px] flex items-center justify-end text-[#222]">
      <span
        className={clsx("absolute right-0 inset-y-0", side === "sell" ? "bg-[#c1e6c1]" : "bg-[#fac9c9]")}
        style={{ width: row.bar }}
      />
      <span className="relative pr-px">{row.vol}</span>
    </span>
    <span className={clsx("ml-[7px] w-[13px] h-[13px] rounded-full", row.dot)} />
  </div>
);

const trades = [
  { time: "14:56", price: "31.60", up: false, vol: "958" },
  { time: "14:57", price: "31.58", up: false, vol: "1251" },
  { time: "15:00", price: "31.72", up: true, vol: "4.0万" },
];

const OrderBook = () => (
  <div className="w-[343px] border-l-2 border-[#d8d8d8] flex flex-col">
    <div className="pt-[6px] pl-[5px] flex text-[32.500px] leading-none text-[#666]">
      <span className="w-[110px] h-[66px] rounded-[9px] bg-[#feeee6] text-[#f25c07] font-bold flex items-center justify-center">千档</span>
      <span className="w-[110px] h-[66px] flex items-center justify-center">大单</span>
      <span className="w-[110px] h-[66px] flex items-center justify-center">分价</span>
    </div>
    <p className="h-[51px] pt-[14px] pl-[57px] text-[33px] leading-[34px] text-[#e8600f] whitespace-nowrap">查看千档行情 &gt;</p>
    <div className="pl-[5px]">
      {sells.map((r) => (
        <LevelRow key={r.label} row={r} side="sell" />
      ))}
    </div>
    <div className="ml-[5px] mt-[9px] w-[330px] h-[6px] bg-[linear-gradient(135deg,#d94f4f_68.500%,#5fae4b_68.500%)]" />
    <div className="mt-[14px] pl-[5px] h-[498px] overflow-hidden">
      {buys.map((r) => (
        <LevelRow key={r.label} row={r} side="buy" />
      ))}
    </div>
    <div className="h-[206px] border-t-[1.500px] border-[#dedede]">
      <div className="h-[56px] flex items-center pl-[98px] text-[36px] leading-none text-[#666]">
        分时成交
        <span className="ml-[9px] border-x-[10.500px] border-b-[14px] border-x-transparent border-b-[#666]" />
      </div>
      {trades.map((t) => (
        <div key={t.time} className="h-[51px] flex items-center pl-[6px] pr-[6px] text-[37px] leading-none">
          <span className="w-[135px] text-[#666]">{t.time}</span>
          <span className="w-[92px] text-[#d9302c] tracking-[-0.3px]">{t.price}</span>
          <svg width="17" height="22" viewBox="0 0 17 22" fill="none" strokeWidth="3" stroke={t.up ? "#cc1414" : GREEN}>
            {t.up ? <path d="M8.500 22V2M1.500 9l7-7 7 7" /> : <path d="M8.500 0v20M1.500 13l7 7 7-7" />}
          </svg>
          <span className={clsx("ml-auto whitespace-nowrap tracking-[-0.5px]", t.up ? "text-[#d9302c]" : "text-[#109410]")}>{t.vol}</span>
        </div>
      ))}
    </div>
  </div>
);

const Queue = ({ label, price, vol, cells, cls }: { label: string; price: string; vol: string; cells: string[]; cls: string }) => (
  <div className="flex-1">
    <div className="h-[60px] flex items-center justify-between pl-[11px] pr-[7px] border-b-[1.500px] border-[#d8d8d8] text-[37px] leading-none text-[#222]">
      <span className="w-[90px]">
        <span className="text-[33px]">{label[0]}</span>
        {label[1]}
      </span>
      <span className="text-[#d9302c] tracking-[-0.4px]">{price}</span>
      <span className="w-[90px] text-right tracking-[-0.4px]">{vol}</span>
    </div>
    <div className={clsx("grid grid-cols-4 pl-[7px] pr-[5px] text-[36px] leading-[60px] text-right", cls)}>
      {cells.map((c, i) => (
        <span key={i}>{c}</span>
      ))}
    </div>
  </div>
);

const NavItem = ({ label, children }: { label: string; children: React.ReactNode }) => (
  <div className="w-[215px] flex flex-col items-center text-[39px] leading-none text-[#666]">
    <svg width="66" height="62" viewBox="0 0 66 62" className="mt-[7px]" fill="none" stroke="#666" strokeWidth="3">
      {children}
    </svg>
    <span className="mt-[15px]">{label}</span>
  </div>
);

const BottomNav = () => (
  <div className="h-[174px] flex bg-[#f6f8fa] border-t-[1.500px] border-[#d4d4d4]">
    <div className="w-[273px] text-[#109410]">
      <span className="block w-0 ml-[126px] mt-[8px] border-x-[11px] border-b-[7px] border-x-transparent border-b-[#808080]" />
      <p className="pl-[54px] mt-[11px] text-[46px] leading-[46px]">3897.03</p>
      <div className="mt-[3px] pl-[36px] flex items-center text-[39px] leading-[46px]">
        <span className="w-[118px] text-[39.500px] text-[#666]">上证</span>
        <span className="text-[38px] whitespace-nowrap tracking-[-0.8px]">−0.94%</span>
      </div>
    </div>
    <NavItem label="交易">
      <path d="M14 11A28 28 0 0 1 56 47M52 52A28 28 0 0 1 8 18M2 24l7-8M65 40l-9 8V38" />
      <path d="M23 17l10 13 10-13M22 31h22M22 40h22M33 30v18" />
    </NavItem>
    <NavItem label="发帖">
      <path d="M42 4H12Q6 4 6 10V52Q6 58 12 58H52Q58 58 58 52V20" />
      <path d="M56 8L52 14M50 15L25 41l5-11 19-18z" strokeWidth="5" />
    </NavItem>
    <NavItem label="功能">
      <rect x="8" y="5" width="21" height="24" rx="4" />
      <rect x="8" y="35" width="21" height="23" rx="4" />
      <rect x="36" y="35" width="22" height="23" rx="4" />
      <path d="M46 5q1.500-1.500 3 0l9 10q1.500 2 0 4l-9 10q-1.500 1.500-3 0l-9-10q-1.500-2 0-4z" />
    </NavItem>
    <NavItem label="设自选">
      <circle cx="33" cy="31" r="27.500" />
      <path d="M18 31h6M30 31h6M42 31h6" strokeWidth="6" />
    </NavItem>
  </div>
);

export default function App() {
  return (
    <div className="w-[1133px] h-[2453px] overflow-hidden bg-white flex flex-col [font-family:Roboto,'Noto_Sans_CJK_SC',sans-serif]">
      <StatusBar />
      <Header />
      <Quote />
      <Notice />
      <Tabs />
      <InfoBar />
      <div className="h-[1339px] shrink-0 flex border-b-[1.500px] border-[#d0d0d0]">
        <Charts />
        <OrderBook />
      </div>
      <div className="h-[170px] shrink-0 flex">
        <Queue label="卖1" price="31.72" vol="138" cells={["14", "4", "10", "1", "2", "3", "1", "8"]} cls="text-[#109410]" />
        <div className="w-[1.500px] bg-[#d8d8d8]" />
        <Queue label="买1" price="31.71" vol="2167" cells={["1", "4", "4", "2", "4", "6", "2146"]} cls="text-[#d9302c]" />
      </div>
      <BottomNav />
    </div>
  );
}
